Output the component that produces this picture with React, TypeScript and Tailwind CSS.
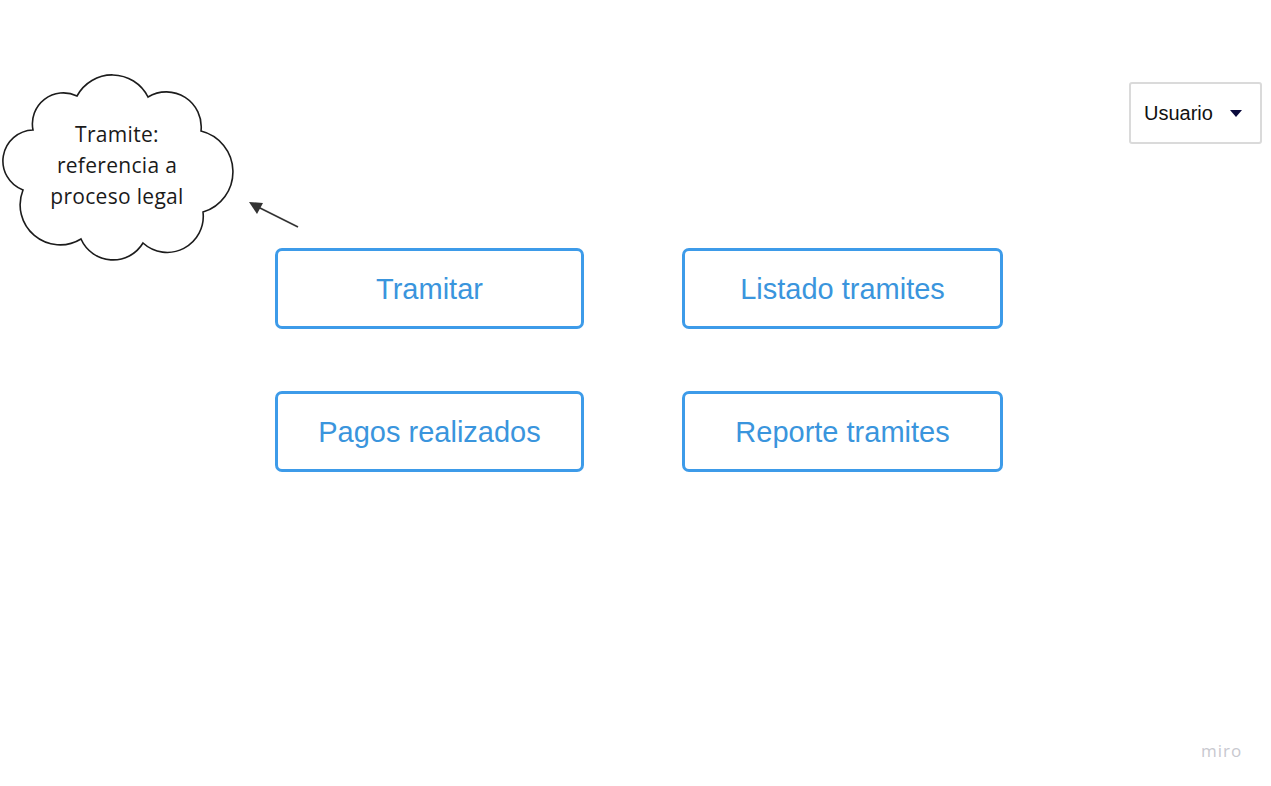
import React from "react";

const actions = [
	{ label: "Tramitar", w: "w-[309px]" },
	{ label: "Listado tramites", w: "w-[321px]" },
	{ label: "Pagos realizados", w: "w-[309px]" },
	{ label: "Reporte tramites", w: "w-[321px]" },
];

function Cloud() {
	return (
		<div className="absolute left-0 top-[70px] w-[240px] h-[196px]">
			<svg width="240" height="196" viewBox="0 70 240 196" className="absolute inset-0">
				<path
					d="M33 130 A31 31 0 0 1 77 96 A40 40 0 0 1 148 97 A35 35 0 0 1 201 131 A42 42 0 0 1 203 212 A36 36 0 0 1 143 243 A35 35 0 0 1 81 239 A40 40 0 0 1 23 190 A31 31 0 0 1 33 130 Z"
					fill="white"
					stroke="#1c1c1c"
					strokeWidth="1.6"
				/>
			</svg>
			<div className="relative flex flex-col items-center pt-[49px] pr-[6px] text-[21px] leading-[31px] tracking-[0.3px] text-[#1a1a1a] font-['Open_Sans',sans-serif]">
				<span>Tramite:</span>
				<span>referencia a</span>
				<span>proceso legal</span>
			</div>
		</div>
	);
}

export default function App() {
	return (
		<div className="relative w-full h-[786px] bg-white overflow-hidden font-['Liberation_Sans',Arial,sans-serif]">
			<Cloud />

			<svg className="absolute left-0 top-0" width="320" height="240">
				<line x1="298" y1="227" x2="256" y2="206" stroke="#333" strokeWidth="1.8" />
				<polygon points="249,202 263,203 257,214" fill="#333" />
			</svg>

			<div className="absolute left-[1129px] top-[82px] w-[133px] h-[62px] flex items-center pl-[13px] gap-[17px] border-2 border-[#dadada] rounded-[3px] bg-white">
				<span className="text-[20px] text-[#111]">Usuario</span>
				<svg width="12" height="7" viewBox="0 0 12 7">
					<path d="M0 0 L12 0 L6 7 Z" fill="#0a0a3c" />
				</svg>
			</div>

			<div className="pt-[248px] pl-[275px]">
				<div className="grid grid-cols-[309px_321px] gap-x-[98px] gap-y-[62px] w-fit">
					{actions.map((a, i) => (
						<div
							key={i}
							className={`${a.w} h-[81px] flex items-center justify-center pt-[2px] border-[3px] border-[#3d9be9] rounded-[7px] text-[29px] text-[#3a95dd]`}
						>
							{a.label}
						</div>
					))}
				</div>
			</div>

			<div className="absolute left-[1201px] top-[738px] text-[17px] font-['Open_Sans',sans-serif] font-medium tracking-[1px] text-[#c8c8cf]">
				miro
			</div>
		</div>
	);
}
